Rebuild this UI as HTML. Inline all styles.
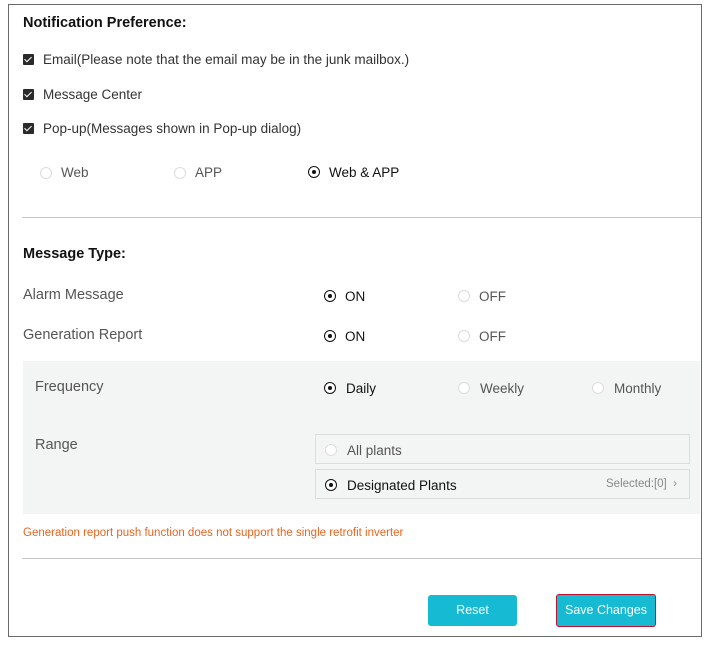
<!DOCTYPE html>
<html><head><meta charset="utf-8"><style>
body{margin:0;width:707px;height:652px;background:#fff;font-family:"Liberation Sans",sans-serif;position:relative;overflow:hidden;color:#333}
.a{position:absolute;white-space:nowrap}
.box{position:absolute;left:8px;top:4px;width:692px;height:631px;border:1px solid #6a6a6a}
.cb{position:absolute;width:11px;height:11px;background:#2a2a2a;border-radius:1px}
.cb:after{content:"";position:absolute;left:3px;top:1px;width:3px;height:6px;border:solid #fff;border-width:0 1.5px 1.5px 0;transform:rotate(45deg)}
.r{position:absolute;width:12px;height:12px;border:1px solid #ddd;border-radius:50%;background:#fff;box-sizing:border-box}
.r.on{border:1.5px solid #111}
.r.on:after{content:"";position:absolute;left:2.5px;top:2.5px;width:4px;height:4px;background:#111;border-radius:50%}
.t{font-size:13.5px;color:#333}
.g{color:#555}
.hr{position:absolute;left:22px;width:679px;height:1px;background:#c8c8c8}
.btn{position:absolute;background:#16bbd3;color:#fff;font-size:12.5px;text-align:center;border-radius:3px}
</style></head><body>
<div class="box"></div>
<div class="a" style="left:23px;top:15px;font-size:14.5px;font-weight:bold;color:#111">Notification Preference:</div>
<div class="cb" style="left:23px;top:54px"></div><div class="a t" style="left:43px;top:52px">Email(Please note that the email may be in the junk mailbox.)</div>
<div class="cb" style="left:23px;top:89px"></div><div class="a t" style="left:43px;top:87px">Message Center</div>
<div class="cb" style="left:23px;top:123px"></div><div class="a t" style="left:43px;top:121px">Pop-up(Messages shown in Pop-up dialog)</div>
<div class="r" style="left:40px;top:167px"></div><div class="a t g" style="left:61px;top:165px">Web</div>
<div class="r" style="left:174px;top:167px"></div><div class="a t g" style="left:195px;top:165px">APP</div>
<div class="r on" style="left:308px;top:166px"></div><div class="a t" style="left:329px;top:165px;color:#111">Web &amp; APP</div>
<div class="hr" style="top:217px"></div>
<div class="a" style="left:23px;top:246px;font-size:14.5px;font-weight:bold;color:#111">Message Type:</div>
<div class="a" style="left:23px;top:287px;font-size:14.5px;color:#555">Alarm Message</div>
<div class="r on" style="left:324px;top:290px"></div><div class="a t" style="left:345px;top:289px;color:#111">ON</div>
<div class="r" style="left:458px;top:290px"></div><div class="a t g" style="left:479px;top:289px">OFF</div>
<div class="a" style="left:23px;top:327px;font-size:14.5px;color:#555">Generation Report</div>
<div class="r on" style="left:324px;top:330px"></div><div class="a t" style="left:345px;top:329px;color:#111">ON</div>
<div class="r" style="left:458px;top:330px"></div><div class="a t g" style="left:479px;top:329px">OFF</div>
<div class="a" style="left:23px;top:361px;width:677px;height:153px;background:#f3f5f4"></div>
<div class="a" style="left:35px;top:379px;font-size:14.5px;color:#555">Frequency</div>
<div class="r on" style="left:324px;top:382px"></div><div class="a t" style="left:346px;top:381px;color:#111">Daily</div>
<div class="r" style="left:458px;top:382px"></div><div class="a t g" style="left:480px;top:381px">Weekly</div>
<div class="r" style="left:592px;top:382px"></div><div class="a t g" style="left:614px;top:381px">Monthly</div>
<div class="a" style="left:35px;top:437px;font-size:14.5px;color:#555">Range</div>
<div class="a" style="left:315px;top:434px;width:375px;height:30px;border:1px solid #ddd;box-sizing:border-box"></div>
<div class="r" style="left:325px;top:444px"></div><div class="a t g" style="left:347px;top:443px">All plants</div>
<div class="a" style="left:315px;top:469px;width:375px;height:30px;border:1px solid #ddd;box-sizing:border-box"></div>
<div class="r on" style="left:325px;top:479px"></div><div class="a t" style="left:347px;top:478px;color:#111">Designated Plants</div>
<div class="a" style="left:606px;top:478px;font-size:11.5px;color:#888">Selected:[0] &nbsp;&#8250;</div>
<div class="a" style="left:23px;top:527px;font-size:11.5px;color:#e8641e">Generation report push function does not support the single retrofit inverter</div>
<div class="hr" style="top:558px"></div>
<div class="btn" style="left:428px;top:595px;width:89px;height:31px;line-height:31px">Reset</div>
<div class="btn" style="left:556px;top:594px;width:98px;height:31px;line-height:31px;border:1px solid #c0102a;border-radius:3px">Save Changes</div>
</body></html>
